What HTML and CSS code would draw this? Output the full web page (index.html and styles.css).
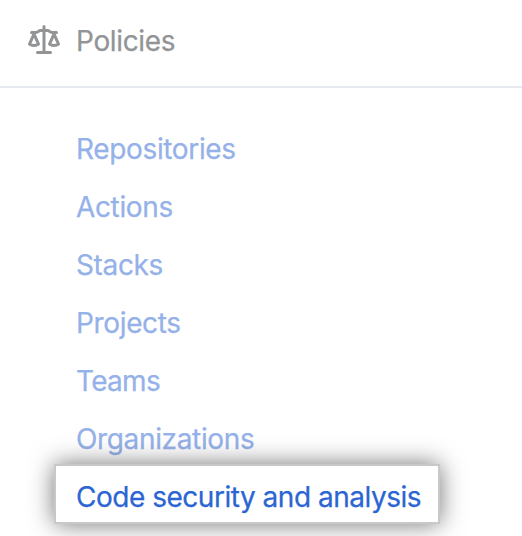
FILE: index.html
```html
<!DOCTYPE html>
<html lang="en">
<head>
<meta charset="utf-8">
<title>Policies</title>
<link rel="stylesheet" href="styles.css">
</head>
<body>
<header class="header">
<svg class="icon" viewBox="0 0 16 16" aria-hidden="true"><path d="M8.75.75V2h.985c.304 0 .603.08.867.231l1.29.736c.038.022.08.033.124.033h2.234a.75.75 0 0 1 0 1.5h-.427l2.111 4.692a.75.75 0 0 1-.154.838l-.53-.53.529.531-.001.002-.002.002-.006.006-.006.005-.01.01-.045.04c-.21.176-.441.327-.686.45C14.556 10.78 13.88 11 13 11a4.498 4.498 0 0 1-2.023-.454 3.544 3.544 0 0 1-.686-.45l-.045-.04-.016-.015-.006-.006-.004-.004v-.001a.75.75 0 0 1-.154-.838L12.178 4.5h-.162c-.305 0-.604-.079-.868-.231l-1.29-.736a.245.245 0 0 0-.124-.033H8.75V13h2.5a.75.75 0 0 1 0 1.5h-6.5a.75.75 0 0 1 0-1.5h2.5V3.5h-.984a.245.245 0 0 0-.124.033l-1.289.737c-.265.15-.564.23-.869.23h-.162l2.112 4.692a.75.75 0 0 1-.154.838l-.53-.53.529.531-.001.002-.002.002-.006.006-.016.015-.045.04c-.21.176-.441.327-.686.45C4.556 10.78 3.88 11 3 11a4.498 4.498 0 0 1-2.023-.454 3.544 3.544 0 0 1-.686-.45l-.045-.04-.016-.015-.006-.006-.004-.004v-.001a.75.75 0 0 1-.154-.838L2.178 4.5H1.75a.75.75 0 0 1 0-1.5h2.234a.249.249 0 0 0 .125-.033l1.288-.737c.265-.15.564-.23.869-.23h.984V.75a.75.75 0 0 1 1.5 0Zm2.945 8.477c.285.135.718.273 1.305.273s1.02-.138 1.305-.273L13 6.327Zm-10 0c.285.135.718.273 1.305.273s1.02-.138 1.305-.273L3 6.327Z"/></svg>
<h1 class="title">Policies</h1>
</header>
<nav class="menu">
<a class="item">Repositories</a>
<a class="item">Actions</a>
<a class="item">Stacks</a>
<a class="item">Projects</a>
<a class="item tight">Teams</a>
<a class="item">Organizations</a>
<a class="item active">Code security and analysis</a>
</nav>
</body>
</html>
```

FILE: styles.css
```css
* { box-sizing: border-box; }
body { margin: 0; height: 536px; overflow: hidden; background: #fff; font: 28px/58px Inter, sans-serif; letter-spacing: -.35px; -webkit-text-stroke: .25px currentColor; }
.header { display: flex; align-items: center; gap: 16px; height: 88px; padding: 0 28px 4px; border-bottom: 2px solid #e6eaee; color: #929496; }
.icon { width: 32px; height: 32px; fill: currentColor; }
.title { margin: 0; padding-bottom: 1px; font-size: 28px; font-weight: 400; }
.menu { display: flex; flex-direction: column; align-items: flex-start; padding: 32px 0 0 54px; }
.item { height: 58px; padding-left: 22px; color: #95b1e9; }
.tight { letter-spacing: -.7px; }
.active { width: 386px; height: 60px; margin-top: -4px; padding-left: 20px; border: 2px solid #c8c8c8; background: #fff; box-shadow: 0 0 24px rgba(0,0,0,.55); color: #2b65d3; line-height: 63px; letter-spacing: -.48px; }
```
